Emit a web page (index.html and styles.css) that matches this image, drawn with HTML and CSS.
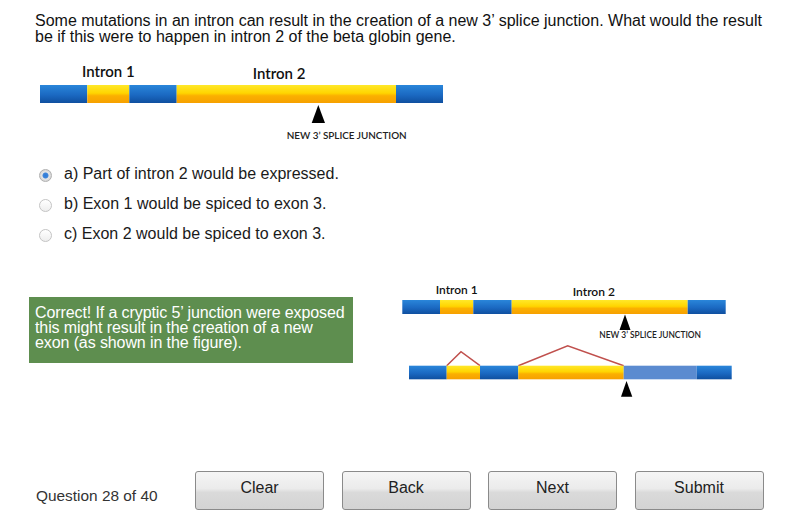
FILE: index.html
```html
<!DOCTYPE html>
<html lang="en">
<head>
    <meta charset="UTF-8">
    <meta name="viewport" content="width=device-width, initial-scale=1.0">
    <title>Question 28 of 40</title>
    <link rel="stylesheet" href="styles.css">
</head>
<body>
    <main class="quiz">
        <p class="question">Some mutations in an intron can result in the creation of a new 3’ splice junction. What would the result be if this were to happen in intron 2 of the beta globin gene.</p>

        <!-- gene diagram: exons blue, introns yellow -->
        <svg class="figure figure-main" width="420" height="88" viewBox="0 0 420 88">
            <defs>
                <linearGradient id="exon" x1="0" y1="0" x2="0" y2="1">
                    <stop offset="0" stop-color="#2a86da"/>
                    <stop offset="0.55" stop-color="#1b69c2"/>
                    <stop offset="1" stop-color="#0f4f9f"/>
                </linearGradient>
                <linearGradient id="intron" x1="0" y1="0" x2="0" y2="1">
                    <stop offset="0" stop-color="#ffe82a"/>
                    <stop offset="0.45" stop-color="#ffd500"/>
                    <stop offset="0.6" stop-color="#fbb000"/>
                    <stop offset="1" stop-color="#f6a000"/>
                </linearGradient>
            </defs>
            <text class="label" x="52" y="18.5">Intron 1</text>
            <text class="label" x="222.7" y="21">Intron 2</text>
            <rect x="10" y="27" width="47.3" height="18" fill="url(#exon)"/>
            <rect x="57.3" y="27" width="42" height="18" fill="url(#intron)"/>
            <rect x="99.3" y="27" width="47.4" height="18" fill="url(#exon)"/>
            <rect x="146.7" y="27" width="219.3" height="18" fill="url(#intron)"/>
            <rect x="366" y="27" width="47" height="18" fill="url(#exon)"/>
            <polygon points="288.3,47 281.7,65 295,65" fill="#000"/>
            <text class="tag" x="256.7" y="81.3" textLength="120" lengthAdjust="spacingAndGlyphs">NEW 3’ SPLICE JUNCTION</text>
        </svg>

        <ul class="options">
            <li class="option"><span class="radio checked"></span>a) Part of intron 2 would be expressed.</li>
            <li class="option"><span class="radio"></span>b) Exon 1 would be spiced to exon 3.</li>
            <li class="option"><span class="radio"></span>c) Exon 2 would be spiced to exon 3.</li>
        </ul>

        <section class="answer">
            <div class="feedback">Correct! If a cryptic 5’ junction were exposed this might result in the creation of a new exon (as shown in the figure).</div>

            <svg class="figure figure-answer" width="336" height="116" viewBox="0 0 336 116">
                <text class="label small" x="35.7" y="11.3" textLength="42" lengthAdjust="spacingAndGlyphs">Intron 1</text>
                <text class="label small" x="172.7" y="13" textLength="42.3" lengthAdjust="spacingAndGlyphs">Intron 2</text>
                <rect x="2.3" y="17" width="37.7" height="14" fill="url(#exon)"/>
                <rect x="40" y="17" width="33.3" height="14" fill="url(#intron)"/>
                <rect x="73.3" y="17" width="38.4" height="14" fill="url(#exon)"/>
                <rect x="111.7" y="17" width="176" height="14" fill="url(#intron)"/>
                <rect x="287.7" y="17" width="38" height="14" fill="url(#exon)"/>
                <polygon points="225,31.5 219.5,47 230.5,47" fill="#000"/>
                <text class="tag" x="199.3" y="55.3" textLength="101.7" lengthAdjust="spacingAndGlyphs" font-size="7">NEW 3’ SPLICE JUNCTION</text>

                <!-- spliced product with the exposed stretch in light blue -->
                <polyline class="splice" points="46.7,82.7 61,68.7 80,82.7"/>
                <polyline class="splice" points="118.3,82.7 167.7,62.7 223.7,82.7"/>
                <rect x="9" y="82.7" width="37.7" height="13.6" fill="url(#exon)"/>
                <rect x="46.7" y="82.7" width="33.3" height="13.6" fill="url(#intron)"/>
                <rect x="80" y="82.7" width="38.3" height="13.6" fill="url(#exon)"/>
                <rect x="118.3" y="82.7" width="105.4" height="13.6" fill="url(#intron)"/>
                <rect x="223.7" y="82.7" width="73" height="13.6" fill="#5b8bd0"/>
                <rect x="296.7" y="82.7" width="35" height="13.6" fill="url(#exon)"/>
                <polygon points="226.5,98 221,113.7 232.3,113.7" fill="#000"/>
            </svg>
        </section>

        <footer class="nav">
            <span class="counter">Question 28 of 40</span>
            <button class="nav-btn">Clear</button>
            <button class="nav-btn">Back</button>
            <button class="nav-btn">Next</button>
            <button class="nav-btn">Submit</button>
        </footer>
    </main>
</body>
</html>
```

FILE: styles.css
```css
body {
    margin: 0;
    background: #fff;
    font-family: "Liberation Sans", Arial, sans-serif;
    font-size: 16px;
    color: #111;
}

.quiz {
    display: flex;
    flex-direction: column;
    align-items: flex-start;
}

.question {
    margin: 13px 20px 0 35px;
    line-height: 16px;
}

.figure {
    display: block;
}

.figure-main {
    margin: 13px 0 0 30px;
}

.label {
    font-family: Lato, "Open Sans", sans-serif;
    font-size: 15px;
    font-weight: 600;
    fill: #111;
}

.label.small {
    font-size: 10.5px;
}

.tag {
    font-family: Lato, "Open Sans", sans-serif;
    font-size: 10px;
    font-weight: 600;
    fill: #222;
}

.splice {
    fill: none;
    stroke: #c0504d;
    stroke-width: 1.5;
}

.options {
    list-style: none;
    margin: 13px 0 0;
    padding: 0;
}

.option {
    display: flex;
    align-items: center;
    height: 30px;
    line-height: 30px;
    color: #1a1a1a;
}

.radio {
    box-sizing: border-box;
    width: 13px;
    height: 13px;
    margin: 2px 12px 0 39px;
    border-radius: 50%;
    border: 1px solid #c4c4c4;
    background: linear-gradient(#fff, #eeeeee);
}

.radio.checked {
    border-color: #b0b0b0;
    background: radial-gradient(circle, #2f7ad6 0, #3f86da 2.6px, #e6e6e6 3.4px, #d2d2d2 6px);
}

.answer {
    display: flex;
    align-items: flex-start;
    margin-top: 34px;
}

.feedback {
    box-sizing: border-box;
    width: 324px;
    height: 66px;
    margin: 14px 0 0 29px;
    padding: 8px 5px 0 6px;
    background: #5e8e4f;
    color: #fff;
    line-height: 15px;
    letter-spacing: -0.1px;
}

.figure-answer {
    margin-left: 47px;
}

.nav {
    display: flex;
    align-items: flex-start;
    gap: 17.5px;
    margin-top: 72px;
}

.counter {
    box-sizing: border-box;
    width: 141.5px;
    margin-left: 36px;
    padding-top: 17px;
    font-size: 15.4px;
    line-height: 16px;
    color: #333;
}

.nav-btn {
    box-sizing: border-box;
    width: 129px;
    height: 39px;
    padding: 8px 0 13px;
    border: 1px solid #8a8a8a;
    border-radius: 3px;
    background: linear-gradient(#f5f5f5 0, #ebebeb 45%, #dadada 55%, #d3d3d3 100%);
    font-family: "Liberation Sans", Arial, sans-serif;
    font-size: 16px;
    line-height: 16px;
    color: #222;
    text-align: center;
}
```
